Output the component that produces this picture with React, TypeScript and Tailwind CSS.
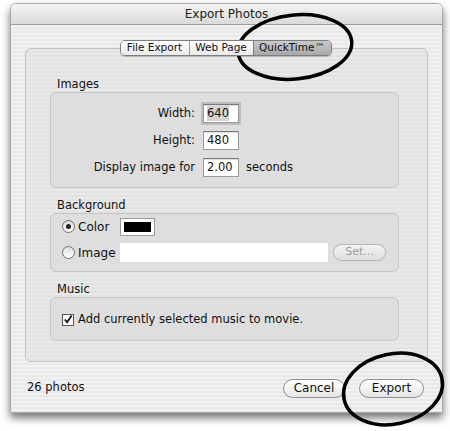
import React from "react";

const font = { fontFamily: '"DejaVu Sans", "Liberation Sans", sans-serif' };

function Field({ value, w, selected }: { value: string; w: string; selected?: boolean }) {
  return (
    <div
      className={`${w} h-[19px] bg-white border border-[#9a9a9a] border-t-[#7a7a7a] flex items-center pl-[3px] shadow-[inset_0_1px_1px_rgba(0,0,0,0.15)] ${
        selected ? "outline outline-2 outline-[#bdbdbd]" : ""
      }`}
    >
      <span className={selected ? "bg-[#d4d4d4] leading-[15px]" : "leading-[15px]"}>{value}</span>
    </div>
  );
}

function Radio({ on }: { on?: boolean }) {
  return (
    <div className="w-[13px] h-[13px] rounded-full border border-[#6f6f6f] bg-[linear-gradient(180deg,#dcdcdc,#ffffff)] flex items-center justify-center">
      {on && <div className="w-[5px] h-[5px] rounded-full bg-[#222]" />}
    </div>
  );
}

export default function App() {
  return (
    <div className="relative w-[450px] h-[431px] bg-white overflow-hidden text-[11.5px] text-[#111]" style={font}>
      <div className="pt-[3px] pl-[10px]">
        <div className="w-[433px] h-[410px] rounded-t-[6px] border border-[#a9a9a9] shadow-[0_5px_8px_rgba(0,0,0,0.55)] flex flex-col overflow-hidden">
          {/* title bar */}
          <div className="h-[21px] shrink-0 bg-[linear-gradient(180deg,#f4f4f4,#dadada)] border-b border-[#9c9c9c] flex items-center justify-center text-[12px] text-[#222]">
            Export Photos
          </div>
          {/* body */}
          <div className="flex-1 flex flex-col bg-[repeating-linear-gradient(180deg,#f1f1f1_0px,#f1f1f1_2px,#e9e9e9_2px,#e9e9e9_4px)] px-[14px] pt-[15px]">
            {/* tabs */}
            <div className="self-center relative z-10 flex h-[16px] rounded-[5px] border border-[#7d7d7d] overflow-hidden shadow-[0_1px_1px_rgba(0,0,0,0.2)] text-[10.5px] mr-[2px]">
              <div className="w-[69px] flex items-center justify-center bg-[linear-gradient(180deg,#ffffff,#e9e9e9)] border-r border-[#9a9a9a]">File Export</div>
              <div className="w-[64px] flex items-center justify-center bg-[linear-gradient(180deg,#ffffff,#e9e9e9)] border-r border-[#7d7d7d]">Web Page</div>
              <div className="w-[77px] flex items-center justify-center bg-[linear-gradient(180deg,#c9c9c9,#a9a9a9)]">QuickTime™</div>
            </div>
            {/* tab box */}
            <div className="-mt-[8px] h-[314px] rounded-[6px] border border-[#c2c2c2] bg-[repeating-linear-gradient(180deg,#e9e9e9_0px,#e9e9e9_2px,#e2e2e2_2px,#e2e2e2_4px)] pl-[24px] pr-[28px] pt-[28px] flex flex-col">
              {/* Images */}
              <div className="h-[15px] pl-[7px] leading-[15px]">Images</div>
              <div className="h-[96px] rounded-[6px] border border-[#c6c6c6] bg-[#dedede] pt-[11px] flex flex-col gap-[8px]">
                <div className="flex items-center">
                  <span className="w-[145px] text-right pr-[1px]">Width:</span>
                  <div className="ml-[7px]"><Field value="640" w="w-[36px]" selected /></div>
                </div>
                <div className="flex items-center">
                  <span className="w-[145px] text-right pr-[1px]">Height:</span>
                  <div className="ml-[7px]"><Field value="480" w="w-[36px]" /></div>
                </div>
                <div className="flex items-center">
                  <span className="w-[145px] text-right pr-[1px]">Display image for</span>
                  <div className="ml-[7px]"><Field value="2.00" w="w-[36px]" /></div>
                  <span className="ml-[7px]">seconds</span>
                </div>
              </div>
              {/* Background */}
              <div className="h-[15px] mt-[10px] pl-[7px] leading-[15px]">Background</div>
              <div className="h-[59px] rounded-[6px] border border-[#c6c6c6] bg-[#dedede] pl-[11px] pt-[3px] flex flex-col gap-[7px]">
                <div className="flex items-center h-[19px]">
                  <div className="w-[58px] flex items-center gap-[3px]">
                    <Radio on />
                    <span className="text-[12px]">Color</span>
                  </div>
                  <div className="w-[35px] h-[18px] bg-white border border-[#9a9a9a] p-[3px]">
                    <div className="w-full h-full bg-black" />
                  </div>
                </div>
                <div className="flex items-center h-[19px]">
                  <div className="w-[58px] flex items-center gap-[3px]">
                    <Radio />
                    <span className="text-[12px]">Image</span>
                  </div>
                  <div className="w-[208px] h-[19px] bg-white" />
                  <div className="ml-[5px] w-[53px] h-[17px] rounded-full border border-[#b4b4b4] bg-[linear-gradient(180deg,#f2f2f2,#e0e0e0)] flex items-center justify-center text-[#9c9c9c] text-[11px]">
                    Set...
                  </div>
                </div>
              </div>
              {/* Music */}
              <div className="h-[15px] mt-[10px] pl-[7px] leading-[15px]">Music</div>
              <div className="h-[44px] rounded-[6px] border border-[#c6c6c6] bg-[#dedede] pl-[11px] pt-[13px]">
                <div className="flex items-center gap-[4px]">
                  <div className="w-[12px] h-[12px] border border-[#555] bg-white flex items-center justify-center">
                    <svg width="11" height="11" viewBox="0 0 11 11">
                      <path d="M2 5.5 L4.5 8.5 L9.5 1" fill="none" stroke="#111" strokeWidth="2" />
                    </svg>
                  </div>
                  <span>Add currently selected music to movie.</span>
                </div>
              </div>
            </div>
            {/* bottom row */}
            <div className="flex items-center h-[52px]">
              <span className="ml-[2px]">26 photos</span>
              <div className="ml-auto flex gap-[14px] mr-[4px]">
                <div className="w-[62px] h-[19px] rounded-full border border-[#8e8e8e] bg-[linear-gradient(180deg,#ffffff,#e6e6e6)] flex items-center justify-center text-[12px]">Cancel</div>
                <div className="w-[65px] h-[19px] rounded-full border border-[#8e8e8e] bg-[linear-gradient(180deg,#ffffff,#e6e6e6)] flex items-center justify-center text-[12px]">Export</div>
              </div>
            </div>
          </div>
        </div>
      </div>
      {/* hand drawn ellipses */}
      <svg className="absolute inset-0 pointer-events-none" width="450" height="431" viewBox="0 0 450 431">
        <ellipse cx="295" cy="47" rx="57" ry="32" transform="rotate(-6 295 47)" fill="none" stroke="#000" strokeWidth="3.5" />
        <ellipse cx="393" cy="389" rx="50" ry="35" transform="rotate(-12 393 389)" fill="none" stroke="#000" strokeWidth="3.5" />
      </svg>
    </div>
  );
}
